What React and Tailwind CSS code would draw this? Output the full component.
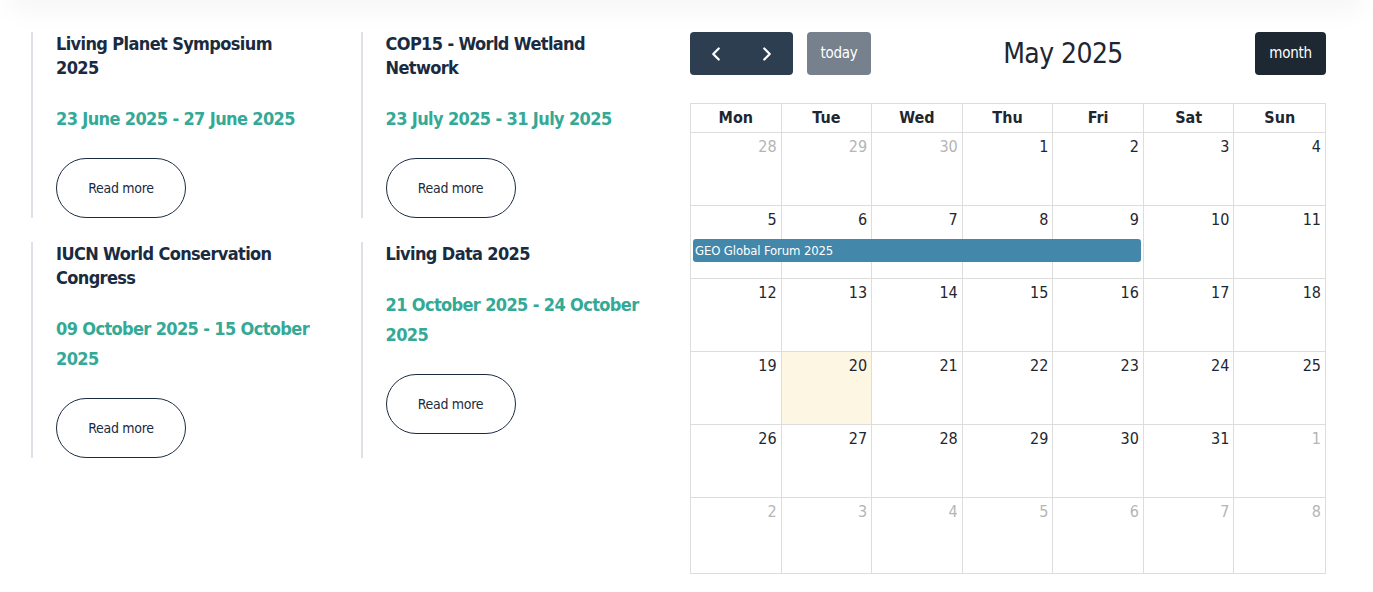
import React from "react";
import { ChevronLeft, ChevronRight } from "lucide-react";

const events = [
  { title: "Living Planet Symposium 2025", date: "23 June 2025 - 27 June 2025" },
  { title: "COP15 - World Wetland Network", date: "23 July 2025 - 31 July 2025" },
  { title: "IUCN World Conservation Congress", date: "09 October 2025 - 15 October 2025" },
  { title: "Living Data 2025", date: "21 October 2025 - 24 October 2025" },
];

const dayNames = ["Mon", "Tue", "Wed", "Thu", "Fri", "Sat", "Sun"];

// weeks for May 2025, other-month days flagged
const weeks = [
  [[28, 1], [29, 1], [30, 1], [1], [2], [3], [4]],
  [[5], [6], [7], [8], [9], [10], [11]],
  [[12], [13], [14], [15], [16], [17], [18]],
  [[19], [20], [21], [22], [23], [24], [25]],
  [[26], [27], [28], [29], [30], [31], [1, 1]],
  [[2, 1], [3, 1], [4, 1], [5, 1], [6, 1], [7, 1], [8, 1]],
];

const font = { fontFamily: '"DejaVu Sans Condensed", "DejaVu Sans", sans-serif' };

function EventCard({ title, date }) {
  return (
    <div className="border-l-2 border-[#dde0e6] pl-[23px] flex flex-col gap-6">
      <h3 className="w-[262px] text-[18px] leading-6 font-bold tracking-[-0.035em] text-[#1b2b3f]">{title}</h3>
      <p className="w-[262px] text-[18px] leading-[30px] font-bold tracking-[-0.035em] text-[#33a996]">{date}</p>
      <button className="w-[130px] h-[60px] rounded-full border border-[#1b2b3f] text-[14px] tracking-[-0.02em] text-[#1b2b3f] bg-white">
        Read more
      </button>
    </div>
  );
}

function Calendar() {
  return (
    <div className="w-[636px] text-[#1e2731]">
      <div className="flex items-center h-[43px]">
        <div className="flex items-center gap-[14px]">
          <div className="flex rounded-[4px] bg-[#2c3e50] text-white overflow-hidden">
            <button className="w-[51px] h-[43px] flex items-center justify-center">
              <ChevronLeft size={22} strokeWidth={2.5} />
            </button>
            <button className="w-[52px] h-[43px] flex items-center justify-center">
              <ChevronRight size={22} strokeWidth={2.5} />
            </button>
          </div>
          <button className="w-[64px] h-[43px] rounded-[4px] bg-[#76818d] text-white text-[15px] tracking-[-0.02em]">today</button>
        </div>
        <h2 className="flex-1 text-center text-[28px] leading-none tracking-[-0.02em]">May 2025</h2>
        <button className="w-[71px] h-[43px] rounded-[4px] bg-[#1e2833] text-white text-[15px] tracking-[-0.02em]">month</button>
      </div>

      <div className="mt-[28px] border border-[#dddddd]">
        <div className="grid grid-cols-7 h-[28px]">
          {dayNames.map((d, i) => (
            <div
              key={d}
              className={`flex items-center justify-center font-bold text-[16px] ${i < 6 ? "border-r border-[#dddddd]" : ""}`}
            >
              {d}
            </div>
          ))}
        </div>
        {weeks.map((week, wi) => (
          <div key={wi} className={`relative grid grid-cols-7 border-t border-[#dddddd] ${wi === 5 ? "h-[76px]" : "h-[73px]"}`}>
            {week.map(([n, other], di) => (
              <div
                key={di}
                className={`text-right pr-[4px] pt-[2px] text-[16px] leading-6 ${di < 6 ? "border-r border-[#dddddd]" : ""} ${
                  wi === 3 && di === 1 ? "bg-[#fdf6e2]" : ""
                } ${other ? "text-[#b5b5b5]" : "text-[#1e2731]"}`}
              >
                {n}
              </div>
            ))}
            {wi === 1 && (
              <div className="absolute left-[2px] top-[33px] w-[448px] h-[23px] rounded-[3px] bg-[#4387ab] text-white text-[13px] tracking-[-0.01em] leading-[23px] pl-[2px]">
                GEO Global Forum 2025
              </div>
            )}
          </div>
        ))}
      </div>
    </div>
  );
}

export default function App() {
  return (
    <div className="min-h-[592px] bg-white overflow-hidden" style={font}>
      <div className="mx-[20px] h-[10px] -mt-[10px] bg-white shadow-[0_0_28px_10px_rgba(0,0,0,0.045)]" />
      <div className="flex pl-[31px] pt-[32px] pb-[18px]">
        <div className="w-[659px] grid grid-cols-2 gap-y-6 content-start">
          {events.map((e) => (
            <EventCard key={e.title} {...e} />
          ))}
        </div>
        <Calendar />
      </div>
    </div>
  );
}
